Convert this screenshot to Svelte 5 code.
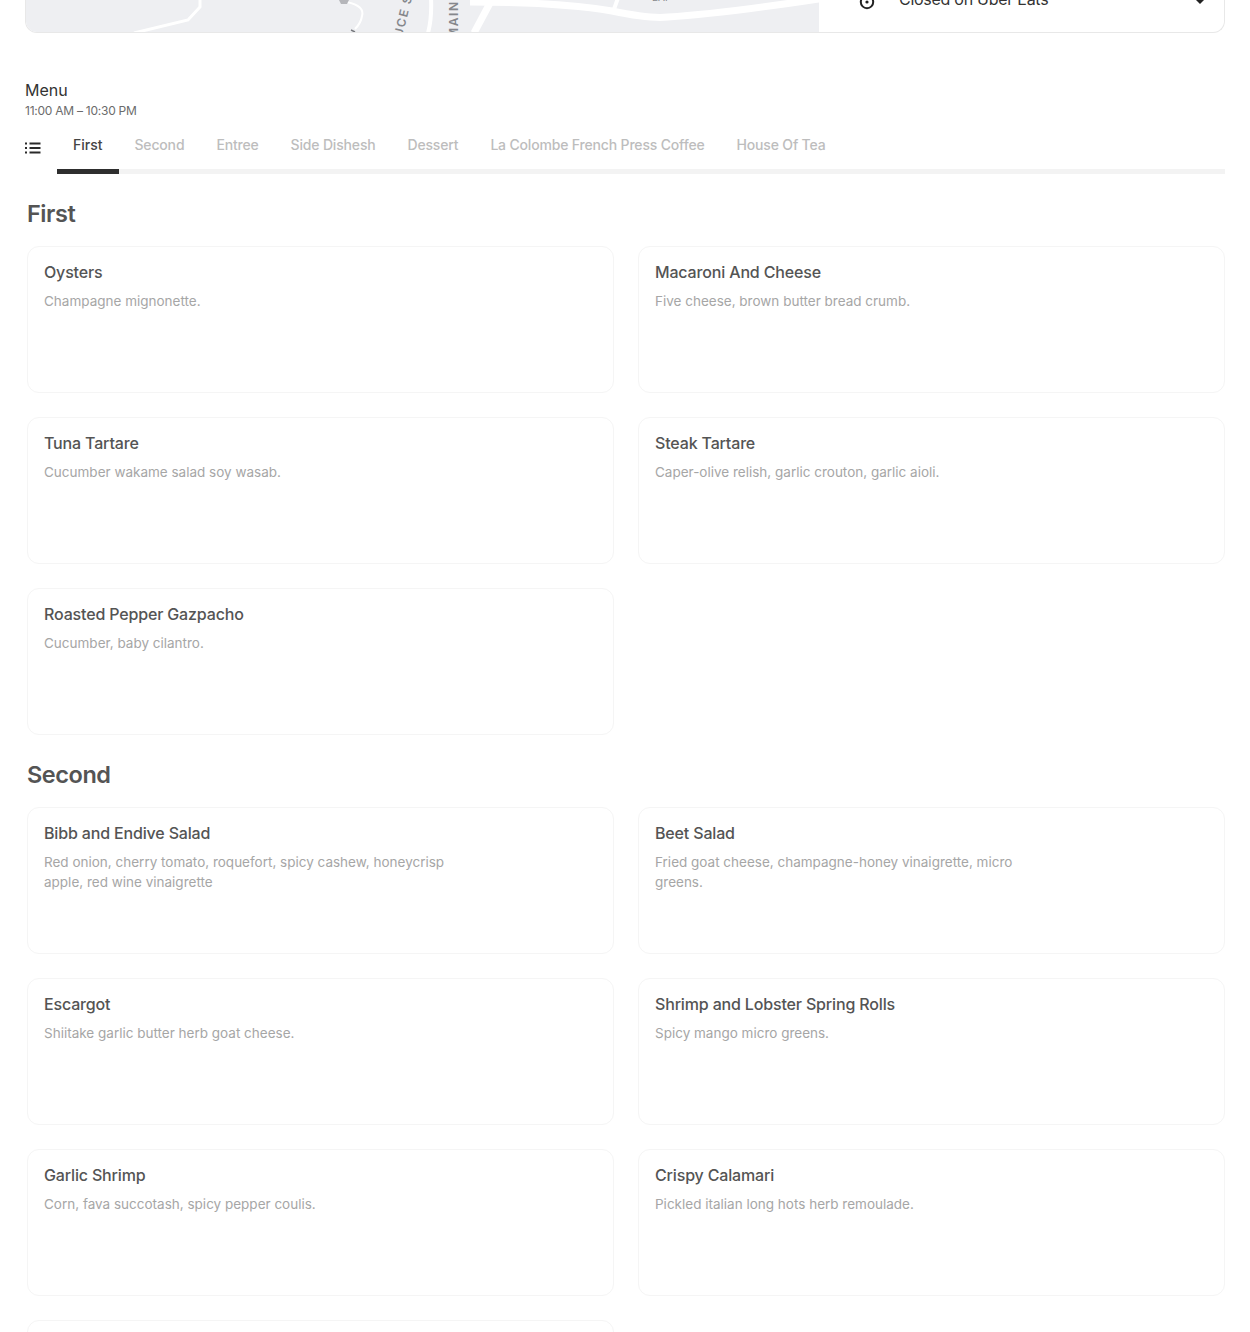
<script>
  const sections = [
    { title: 'First', items: [
      ['Oysters', 'Champagne mignonette.'],
      ['Macaroni And Cheese', 'Five cheese, brown butter bread crumb.'],
      ['Tuna Tartare', 'Cucumber wakame salad soy wasab.'],
      ['Steak Tartare', 'Caper-olive relish, garlic crouton, garlic aioli.'],
      ['Roasted Pepper Gazpacho', 'Cucumber, baby cilantro.']
    ]},
    { title: 'Second', items: [
      ['Bibb and Endive Salad', 'Red onion, cherry tomato, roquefort, spicy cashew, honeycrisp apple, red wine vinaigrette'],
      ['Beet Salad', 'Fried goat cheese, champagne-honey vinaigrette, micro greens.'],
      ['Escargot', 'Shiitake garlic butter herb goat cheese.'],
      ['Shrimp and Lobster Spring Rolls', 'Spicy mango micro greens.'],
      ['Garlic Shrimp', 'Corn, fava succotash, spicy pepper coulis.'],
      ['Crispy Calamari', 'Pickled italian long hots herb remoulade.'],
      ['', '']
    ]}
  ];
  const tabs = ['First', 'Second', 'Entree', 'Side Dishesh', 'Dessert', 'La Colombe French Press Coffee', 'House Of Tea'];
</script>

<div class="page">
  <div class="hero">
    <div class="map">
      <svg width="793" height="33" viewBox="26 0 793 33" fill="none">
        <g stroke="#fff" stroke-width="3">
          <path d="M134 33 L188 20 L200 7 L200 -4"/>
          <path d="M347 2 Q365 6 362 16 Q361 23 355 29" stroke-width="2"/>
          <path d="M431 -2 Q432 18 428 33" stroke-width="4"/>
        </g>
        <path d="M339 0 L349 0 L347 4 L341 4 Z" fill="#b5b6ba"/>
        <path d="M351 30 L355 32" stroke="#77797e" stroke-width="1.5"/>
        <g stroke="#fff" stroke-width="7">
          <path d="M474 33 L490 3"/>
          <path d="M470 2 Q560 2 612 11 Q650 19 668 17 Q720 14 825 -2"/>
          <path d="M613 12 L618 -2" stroke-width="4"/>
        </g>
        <text class="st" transform="translate(402 38) rotate(-76)">UCE S</text>
        <text class="st" transform="translate(458 39) rotate(-90)">MAIN</text>
        <text class="sm" x="652" y="1">EAF</text>
      </svg>
    </div>
    <div class="info">
      <svg class="clock" width="16" height="16" viewBox="0 0 16 16" fill="none"><circle cx="8" cy="6" r="6.2" stroke="#222" stroke-width="2"/><circle cx="8" cy="6" r="1.6" fill="#222"/></svg>
      <span class="closed">Closed on Uber Eats</span>
      <svg class="chev" width="10" height="6" viewBox="0 0 10 6"><path d="M1 0 L5 4 L9 0 Z" fill="#222"/></svg>
    </div>
  </div>

  <div class="head">
    <div class="menu">Menu</div>
    <div class="hours">11:00 AM – 10:30 PM</div>
  </div>

  <div class="tabrow">
    <svg class="list" width="16" height="12" viewBox="0 0 16 12" fill="#2a2a2a">
      <rect x="0" y="0.5" width="2" height="2"/><rect x="4.5" y="0.5" width="11" height="2"/>
      <rect x="0" y="5" width="2" height="2"/><rect x="4.5" y="5" width="11" height="2"/>
      <rect x="0" y="9.5" width="2" height="2"/><rect x="4.5" y="9.5" width="11" height="2"/>
    </svg>
    <div class="tabs">
      {#each tabs as t, i}
        <div class="tab" class:active={i === 0}>{t}</div>
      {/each}
    </div>
  </div>

  {#each sections as s}
    <h2>{s.title}</h2>
    <div class="grid">
      {#each s.items as it}
        <div class="card">
          {#if it[0]}
            <div class="name">{it[0]}</div>
            <div class="desc">{it[1]}</div>
          {/if}
        </div>
      {/each}
    </div>
  {/each}
</div>

<style>
  :global(body) { margin: 0; background: #fff; overflow: hidden; }
  .page { height: 1332px; overflow: hidden; padding: 0 25px; font-family: Inter, "Liberation Sans", sans-serif; color: #222; }
  .hero { height: 32px; display: flex; border: 1px solid #e8e8e8; border-top: 0; border-radius: 0 0 12px 12px; overflow: hidden; }
  .map { width: 793px; background: #eeeff2; flex: none; }
  .map svg { display: block; }
  .st { font-size: 12px; font-weight: 600; fill: #85878c; letter-spacing: 1.6px; }
  .sm { font-size: 10px; fill: #85878c; }
  .info { flex: 1; display: flex; align-items: flex-start; padding-left: 40px; position: relative; }
  .closed { font-size: 16px; line-height: 20px; margin-top: -11px; margin-left: 24px; color: #333; letter-spacing: -0.27px; }
  .clock { margin-top: -4px; }
  .chev { position: absolute; right: 19px; top: 0; }
  .head { margin-top: 47px; }
  .menu { font-size: 16px; line-height: 20px; color: #333; }
  .hours { font-size: 12px; line-height: 16px; margin-top: 3px; color: #6b6b6b; letter-spacing: -0.25px; }
  .tabrow { display: flex; margin-top: 9px; height: 46px; }
  .list { margin-top: 14px; flex: none; }
  .tabs { flex: 1; display: flex; margin-left: 16px; height: 46px; box-sizing: border-box; border-bottom: 5px solid #f3f3f3; }
  .tab { font-size: 14px; font-weight: 500; line-height: 18px; padding: 8px 16px 0; margin-bottom: -5px; color: #bdbdbd; letter-spacing: -0.17px; }
  .tab.active { color: #444; border-bottom: 5px solid #2e2e2e; letter-spacing: 0; }
  h2 { margin: 26px 0 0 2px; font-size: 23.5px; line-height: 28px; font-weight: 600; color: #545454; letter-spacing: -0.45px; }
  .grid { display: grid; grid-template-columns: 587px 587px; column-gap: 24px; row-gap: 24px; margin: 18px 0 25px 2px; }
  .card { height: 147px; box-sizing: border-box; border: 1px solid #f5f5f5; border-radius: 12px; padding: 15px 16px; }
  .name { font-size: 16px; line-height: 20px; font-weight: 500; color: #545454; letter-spacing: -0.16px; }
  .desc { font-size: 13.5px; line-height: 20px; margin-top: 9px; max-width: 405px; color: #a6a6a6; }
</style>
